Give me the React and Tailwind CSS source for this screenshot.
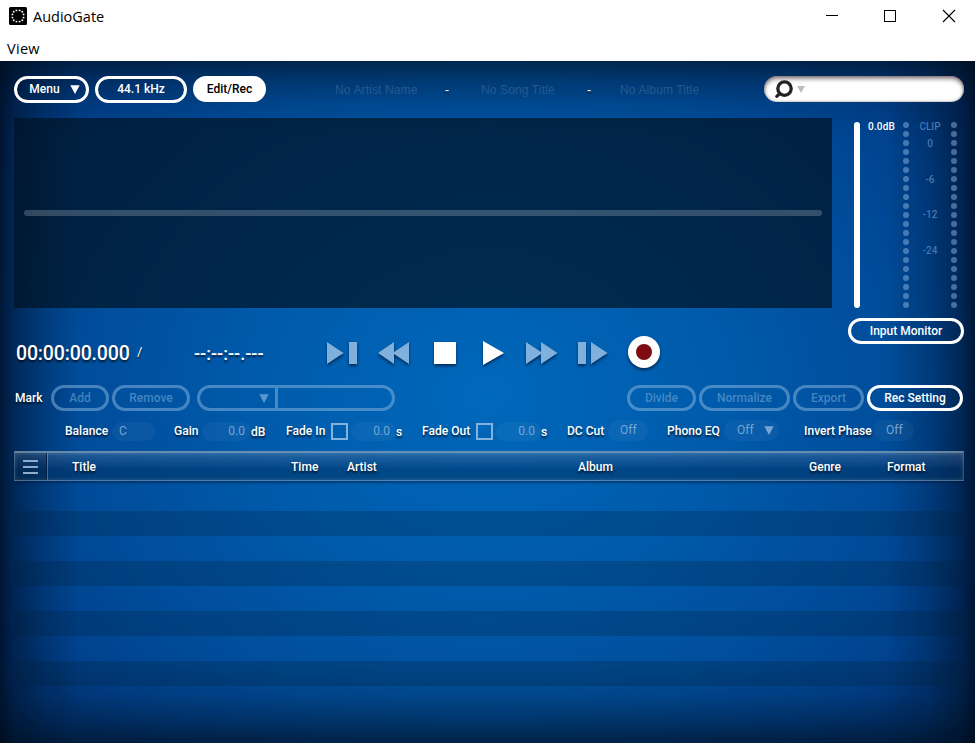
const LABEL_SHADOW = '[text-shadow:0_2px_2px_rgba(0,0,0,0.7)]';

function Pill({ className = '', dim = false, children }) {
  return (
    <button
      className={`flex shrink-0 items-center justify-center rounded-full border-[3px] pb-px text-[12px] font-medium leading-none whitespace-nowrap ${
        dim ? 'border-[#7fb0dc]/55 text-[#7fb0dc]/55' : 'border-white text-white'
      } ${className}`}
    >
      {children}
    </button>
  );
}

function Arrow({ className = '' }) {
  return (
    <svg viewBox="0 0 10 9" className={`h-[9px] w-[10px] shrink-0 fill-current ${className}`}>
      <path d="M0.3 0.3H9.7L5 9Z" />
    </svg>
  );
}

function Label({ className = '', children }) {
  return (
    <span className={`shrink-0 text-[12px] font-medium leading-4 tracking-[0.03px] whitespace-nowrap text-white ${LABEL_SHADOW} ${className}`}>
      {children}
    </span>
  );
}

function Value({ className = '', children }) {
  return (
    <span className={`flex shrink-0 items-center rounded-full bg-white/[0.04] text-[12px] leading-none text-[#74a5d4] ${className}`}>
      {children}
    </span>
  );
}

function CheckBox({ className = '' }) {
  return <span className={`mt-[2px] size-[17px] shrink-0 border-2 border-[#82b2de] ${className}`} />;
}

function TitleBar() {
  return (
    <header className="h-[61px] bg-white font-['Open_Sans','Noto_Sans',sans-serif] text-black">
      <div className="flex h-[33px] items-center">
        <svg viewBox="0 0 18 18" className="-mt-px ml-[9px] size-[18px]">
          <rect width="18" height="18" rx="1.5" fill="#000" />
          <g fill="#fff">
            {DOTS.map(([x, y]) => (
              <circle key={`${x}-${y}`} cx={x} cy={y} r="0.95" />
            ))}
          </g>
        </svg>
        <span className="mt-px ml-[6px] w-[72px] text-[14.5px] leading-none">AudioGate</span>
        <svg viewBox="0 0 132 14" className="-mt-px mr-[18px] ml-auto h-[14px] w-[132px]" fill="none" stroke="#000">
          <path d="M1 6.5H13M59.5 1.5H70.5V12.5H59.5Z" shapeRendering="crispEdges" />
          <path d="M118 1L130 13M130 1L118 13" strokeWidth="1.1" />
        </svg>
      </div>
      <div className="flex h-[28px] items-center pt-[4px] pl-[7px] text-[14.5px] leading-none tracking-[0.3px]">View</div>
    </header>
  );
}

const DOTS = [
  [7.4, 3.4], [10.6, 3.4], [13.3, 4.8], [14.6, 7.4], [14.6, 10.6], [13.3, 13.2],
  [10.6, 14.6], [7.4, 14.6], [4.7, 13.2], [3.4, 10.6], [3.4, 7.4], [4.7, 4.8],
];

function TopBar() {
  return (
    <div className="flex h-[27px] items-start">
      <Pill className="h-[27px] w-[75px]">
        <span className="mr-[10px] ml-[6px]">Menu</span>
        <Arrow className="mt-px" />
      </Pill>
      <Pill className="ml-[6px] h-[27px] w-[92px]">44.1 kHz</Pill>
      <button className="ml-[6px] h-[26px] w-[73px] rounded-full bg-white text-[12px] font-medium text-black">Edit/Rec</button>
      <div className="mt-[6px] ml-[69px] flex font-['Liberation_Sans',Arial,sans-serif] text-[12px] leading-4 tracking-[0.13px] whitespace-nowrap text-[#265890]">
        <span className="w-[110px]">No Artist Name</span>
        <span className={`w-[36px] text-white ${LABEL_SHADOW}`}>-</span>
        <span className="w-[106px]">No Song Title</span>
        <span className={`w-[33px] text-white ${LABEL_SHADOW}`}>-</span>
        <span>No Album Title</span>
      </div>
      <div className="ml-auto flex h-[26px] w-[200px] items-center rounded-full bg-white shadow-[inset_0_3px_4px_rgba(40,20,30,0.5),inset_0_0_3px_rgba(0,0,0,0.4)]">
        <svg viewBox="0 0 18 18" className="ml-[11px] size-[18px]" fill="none" stroke="#222">
          <circle cx="9.5" cy="8.6" r="6.7" strokeWidth="3.3" />
          <path d="M4.600 13.600L1.800 16.400" strokeWidth="3.1" strokeLinecap="round" />
        </svg>
        <svg viewBox="0 0 8 7" className="ml-[4px] h-[7px] w-[8px]">
          <path d="M0 0H8L4 7Z" fill="#bdbdbd" />
        </svg>
      </div>
    </div>
  );
}

function Leds() {
  return (
    <div className="mt-px flex w-[6px] flex-col gap-[3px]">
      {Array.from({ length: 21 }, (_, i) => (
        <span key={i} className="size-[6px] rounded-full bg-[#8fb4dc]/50" />
      ))}
    </div>
  );
}

function Meters() {
  return (
    <div className="ml-[16px] flex w-[116px] flex-col">
      <div className="flex h-[190px] pt-[3px] pl-[6px] text-[10px] font-medium">
        <span className="mt-px h-[186px] w-[6px] rounded-full bg-white" />
        <span className="ml-[8px] w-[35px] leading-3 tracking-[0.2px] whitespace-nowrap text-white">0.0dB</span>
        <Leds />
        <div className="flex w-[42px] flex-col items-center text-[#4677ae]">
          <span className="h-[17px] leading-3">CLIP</span>
          <span className="h-[36px] leading-3">0</span>
          <span className="h-[35px] leading-3">-6</span>
          <span className="h-[36px] leading-3">-12</span>
          <span className="leading-3">-24</span>
        </div>
        <Leds />
      </div>
      <Pill className="mt-[10px] h-[26px] w-[116px]">Input Monitor</Pill>
    </div>
  );
}

function Transport() {
  return (
    <div className="flex h-[32px] items-center text-white">
      <span className={`mt-px ml-[2px] w-[121px] text-[19.5px] leading-none font-medium tracking-[-0.15px] whitespace-nowrap ${LABEL_SHADOW}`}>00:00:00.000</span>
      <span className={`-mt-[3px] w-[57px] text-[13px] leading-none ${LABEL_SHADOW}`}>/</span>
      <span className={`mt-px w-[131px] text-[18px] leading-none font-medium whitespace-nowrap ${LABEL_SHADOW}`}>--:--:--.---</span>
      <svg viewBox="0 0 340 40" className="-mt-[6px] -mb-[2px] h-[40px] w-[340px] [filter:drop-shadow(0_2px_1.5px_rgba(0,20,50,0.7))]">
        <g fill="#80b1dc">
          <path d="M2 11L18.5 22L2 33ZM24 11H32V33H24Z" />
          <path d="M53 22L69 11V20.9L84 11V33L69 23.1V33Z" />
          <path d="M201 11L216 20.9V11L232.5 22L216 33V23.1L201 33Z" />
          <path d="M253 11H261V33H253ZM266 11L282.500 22L266 33Z" />
        </g>
        <g fill="#fff">
          <path d="M109 11H131V33H109ZM158 10L179 22L158 34Z" />
          <circle cx="319" cy="21" r="16" />
        </g>
        <circle cx="319" cy="21" r="8" fill="#7e0c12" />
      </svg>
    </div>
  );
}

function MarkRow() {
  return (
    <div className="mt-[16px] flex h-[26px] items-center">
      <Label className="ml-px w-[36px]">Mark</Label>
      <Pill dim className="h-[26px] w-[58px]">Add</Pill>
      <Pill dim className="ml-[3px] h-[26px] w-[78px]">Remove</Pill>
      <div className="ml-[7px] flex h-[26px] w-[198px] rounded-full border-[3px] border-[#7fb0dc]/55 text-[#7fb0dc]/70">
        <span className="flex w-[78px] items-center justify-end border-r-[3px] border-[#7fb0dc]/55 pr-[6px]">
          <Arrow className="mt-px" />
        </span>
      </div>
      <Pill dim className="ml-auto h-[26px] w-[69px]">Divide</Pill>
      <Pill dim className="ml-[3px] h-[26px] w-[91px]">Normalize</Pill>
      <Pill dim className="ml-[3px] h-[26px] w-[71px]">Export</Pill>
      <Pill className="mr-px ml-[3px] h-[26px] w-[96px]">Rec Setting</Pill>
    </div>
  );
}

function ParamRow() {
  return (
    <div className="mt-[8px] flex h-[22px] items-center">
      <Label className="mt-px ml-[51px] w-[47px]">Balance</Label>
      <Value className="mt-[2px] h-[19px] w-[43px] pl-[7px]">C</Value>
      <Label className="mt-px ml-[19px] w-[28px]">Gain</Label>
      <Value className="mt-[2px] h-[19px] w-[49px] justify-end pr-[6px]">0.0</Value>
      <Label className="mt-[3px] w-[35px]">dB</Label>
      <Label className="mt-px w-[45px]">Fade In</Label>
      <CheckBox />
      <Value className="mt-[2px] ml-[3px] h-[19px] w-[45px] justify-end pr-[6px]">0.0</Value>
      <Label className="mt-[3px] w-[26px]">s</Label>
      <Label className="mt-px w-[54px]">Fade Out</Label>
      <CheckBox />
      <Value className="mt-[2px] ml-[3px] h-[19px] w-[45px] justify-end pr-[6px]">0.0</Value>
      <Label className="mt-[3px] w-[26px]">s</Label>
      <Label className="mt-px w-[41px]">DC Cut</Label>
      <Value className="h-[21px] w-[40px] pl-[12px]">Off</Value>
      <Label className="mt-px ml-[19px] w-[57px]">Phono EQ</Label>
      <Value className="h-[21px] w-[55px] gap-[10px] pl-[13px]">
        Off
        <Arrow />
      </Value>
      <Label className="mt-px ml-[25px] w-[70px]">Invert Phase</Label>
      <Value className="h-[21px] w-[40px] pl-[12px]">Off</Value>
    </div>
  );
}

function TrackList() {
  return (
    <div className="mt-[10px]">
      <div className="flex h-[30px] items-center border border-t-2 border-t-white/40 border-x-white/20 border-b-white/20 bg-linear-to-b from-[#4a7099]/45 via-[#002f60]/50 via-60% to-[#002f55]/50 shadow-[inset_0_0_4px_rgba(255,255,255,0.18),0_2px_2px_rgba(0,20,50,0.45)]">
        <span className="flex h-full w-[33px] items-center justify-center border-r border-white/30 bg-black/10 pr-[2px] shadow-[inset_-1px_0_0_rgba(0,15,40,0.7)]">
          <svg viewBox="0 0 15 14" className="h-[14px] w-[15px]">
            <path d="M0 1H15M0 7H15M0 13H15" stroke="#8fabc9" strokeWidth="2" />
          </svg>
        </span>
        <Label className="ml-[24px] w-[219px]">Title</Label>
        <Label className="w-[56px]">Time</Label>
        <Label className="w-[231px]">Artist</Label>
        <Label className="w-[231px]">Album</Label>
        <Label className="w-[78px]">Genre</Label>
        <Label>Format</Label>
      </div>
      <div className="mt-[30px] flex flex-col gap-[25px]">
        {[0, 1, 2, 3].map((i) => (
          <div key={i} className="h-[25px] bg-[#002038]/25" />
        ))}
      </div>
    </div>
  );
}

// Dark falloff along the four edges of the blue panel
function Vignette({ children }) {
  return (
    <main className="h-[682px] bg-[radial-gradient(ellipse_560px_460px_at_50%_49%,#0068bb_0%,#005dae_35%,#004e9c_70%,#00428e_92%,#003c84_100%)]">
      <div className="h-full bg-[linear-gradient(to_right,rgba(0,8,24,0.75)_0,rgba(0,8,24,0.46)_15px,rgba(0,8,24,0.2)_45px,transparent_80px,transparent_885px,rgba(0,8,24,0.2)_928px,rgba(0,8,24,0.48)_960px,rgba(0,8,24,0.75)_975px)]">
        <div className="h-full bg-[linear-gradient(to_bottom,rgba(0,10,20,0.57)_0,rgba(0,10,20,0.3)_20px,rgba(0,10,20,0.1)_45px,transparent_75px,transparent_600px,rgba(0,10,20,0.14)_635px,rgba(0,10,20,0.36)_660px,rgba(0,10,20,0.62)_682px)] pt-[15px] pr-[11px] pl-[14px]">
          {children}
        </div>
      </div>
    </main>
  );
}

export default function App() {
  return (
    <div className="h-[743px] w-[975px] overflow-hidden font-['Roboto',sans-serif]">
      <TitleBar />
      <Vignette>
        <TopBar />
        <div className="mt-[15px] flex h-[226px]">
          <div className="flex h-[190px] w-[818px] items-center bg-[#001222]/70 px-[10px]">
            <div className="h-[6px] w-full rounded-full bg-white/20" />
          </div>
          <Meters />
        </div>
        <div className="-mt-[7px]">
          <Transport />
        </div>
        <MarkRow />
        <ParamRow />
        <TrackList />
      </Vignette>
    </div>
  );
}
